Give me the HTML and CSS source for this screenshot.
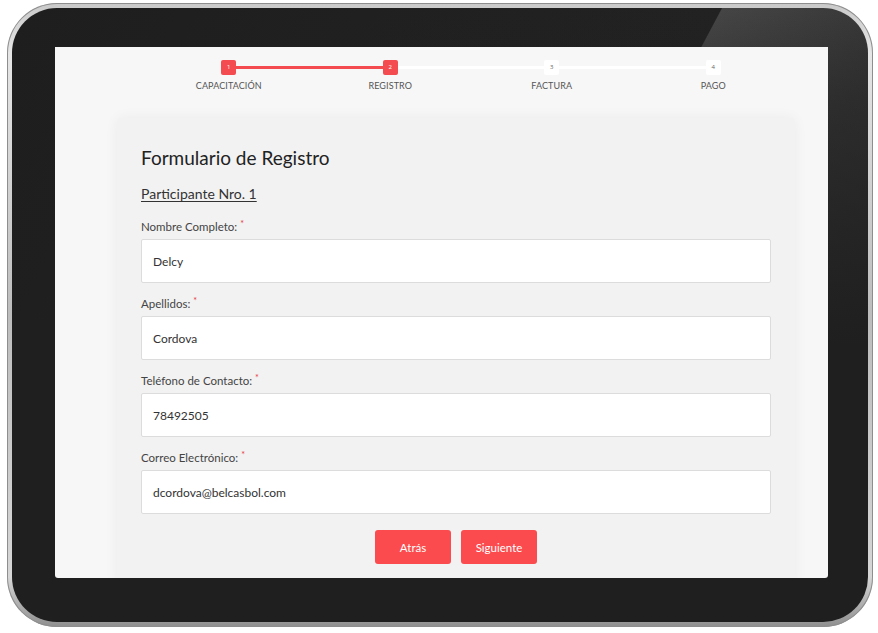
FILE: index.html
```html
<!DOCTYPE html>
<html lang="es">
<head>
<meta charset="utf-8">
<title>Formulario de Registro</title>
<link rel="stylesheet" href="styles.css">
</head>
<body>
<div class="tablet">
  <div class="bezel">
    <div class="screen">
      <ol class="stepper">
        <li class="step done"><span class="marker">1</span><span class="label">CAPACITACIÓN</span></li>
        <li class="step done"><span class="marker">2</span><span class="label">REGISTRO</span></li>
        <li class="step"><span class="marker">3</span><span class="label">FACTURA</span></li>
        <li class="step"><span class="marker">4</span><span class="label">PAGO</span></li>
      </ol>
      <form class="card">
        <h1 class="title">Formulario de Registro</h1>
        <h2 class="subtitle">Participante Nro. 1</h2>
        <div class="field">
          <label class="field-label">Nombre Completo: <sup class="req">*</sup></label>
          <div class="input">Delcy</div>
        </div>
        <div class="field">
          <label class="field-label">Apellidos: <sup class="req">*</sup></label>
          <div class="input">Cordova</div>
        </div>
        <div class="field">
          <label class="field-label">Teléfono de Contacto: <sup class="req">*</sup></label>
          <div class="input">78492505</div>
        </div>
        <div class="field">
          <label class="field-label">Correo Electrónico: <sup class="req">*</sup></label>
          <div class="input">dcordova@belcasbol.com</div>
        </div>
        <div class="actions">
          <button type="button" class="btn">Atrás</button>
          <button type="button" class="btn">Siguiente</button>
        </div>
      </form>
    </div>
  </div>
</div>
</body>
</html>
```
FILE: styles.css
```css
* { box-sizing: border-box; }
html, body { margin: 0; padding: 0; background: #ffffff; }
body { font-family: "Lato", "Open Sans", sans-serif; color: #333; }

.tablet {
  width: 866px;
  height: 624px;
  margin: 3px 0 0 7px;
  padding: 5px;
  border-radius: 50px;
  background: linear-gradient(180deg, #c9c9c9 0%, #e6e6e6 8%, #bdbdbd 50%, #d6d6d6 92%, #8f8f8f 100%);
  box-shadow: inset 0 0 0 1px #8e8e8e;
}

.bezel {
  height: 100%;
  border-radius: 45px;
  padding: 39px 40px 44px 43px;
  background:
    linear-gradient(180deg, rgba(31,31,31,0) 0%, rgba(31,31,31,0.4) 15%, rgba(31,31,31,1) 55%),
    linear-gradient(118deg, #1e1e1e 0%, #222 60%, #454545 60.1%, #363636 75%, #2a2a2a 100%);
}

.screen {
  width: 773px;
  height: 531px;
  background: #f7f7f7;
  overflow: hidden;
  border-radius: 0 0 3px 3px;
}

/* stepper */
.stepper {
  list-style: none;
  margin: 0 0 0 93px;
  padding: 13px 0 0;
  width: 646px;
  display: grid;
  grid-template-columns: repeat(4, 1fr);
}
.step {
  position: relative;
  display: flex;
  flex-direction: column;
  align-items: center;
}
.step + .step::before {
  content: "";
  position: absolute;
  top: 6px;
  right: 50%;
  width: 100%;
  height: 3px;
  background: #ffffff;
}
.step.done + .step.done::before { background: #f44b50; }
.marker {
  position: relative;
  z-index: 1;
  width: 15px;
  height: 15px;
  border-radius: 2px;
  background: #ffffff;
  color: #666;
  font-size: 6px;
  line-height: 15px;
  text-align: center;
  font-family: "Open Sans", sans-serif;
}
.step.done .marker { background: #f44b50; color: #fff; }
.label {
  margin-top: 5px;
  font-size: 9px;
  line-height: 12px;
  color: #555;
  letter-spacing: 0.1px;
}

/* card */
.card {
  width: 678px;
  margin: 26px 0 0 62px;
  padding: 28px 24px 24px;
  background: #f2f2f2;
  box-shadow: 0 0 14px rgba(0,0,0,0.05);
  border-radius: 4px;
}
.title {
  margin: 0;
  font-size: 19px;
  line-height: 24px;
  font-weight: 400;
  color: #222;
}
.subtitle {
  margin: 14px 0 0;
  font-size: 14px;
  line-height: 20px;
  font-weight: 400;
  color: #333;
  text-decoration: underline;
  text-underline-offset: 2px;
  text-decoration-thickness: 1px;
}
.field { margin-top: 15px; }
.field + .field { margin-top: 13px; }
.field-label {
  display: block;
  font-size: 11.5px;
  line-height: 16px;
  color: #444;
}
.req {
  color: #e8383d;
  font-size: 9px;
  vertical-align: top;
  position: relative;
  top: -3px;
}
.input {
  margin-top: 4px;
  height: 44px;
  background: #ffffff;
  border: 1px solid #dcdcdc;
  border-radius: 2px;
  padding: 0 11px;
  display: flex;
  align-items: center;
  font-size: 12px;
  color: #333;
}

.actions {
  margin-top: 16px;
  display: flex;
  justify-content: center;
  gap: 10px;
}
.btn {
  width: 76px;
  height: 34px;
  border: 0;
  border-radius: 3px;
  background: #fb4b4e;
  color: #fff;
  font-family: "Lato", "Open Sans", sans-serif;
  font-size: 11.5px;
  padding: 0;
}
```
